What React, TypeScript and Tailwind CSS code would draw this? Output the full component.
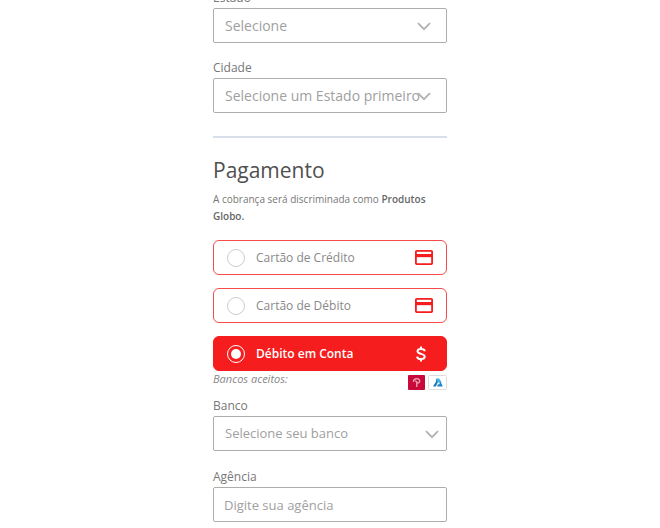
import { useState } from 'react';

function CardIcon() {
  return (
    <svg viewBox="0 0 18 15" className="w-[18px] h-[15px] ml-auto text-[#f51d1d]">
      <rect x=".9" y=".9" width="16.2" height="13.2" rx=".8" fill="none" stroke="currentColor" strokeWidth="1.8" />
      <path d="M1 4h16v3.200H1z" fill="currentColor" />
    </svg>
  );
}

function MoneyIcon() {
  return (
    <svg viewBox="0 0 10 16" fill="none" stroke="currentColor" strokeWidth="2" className="w-2.5 h-4 ml-auto mr-[7px]">
      <path d="M8.700 5.200C8.600 3.600 7.200 2.900 5 2.900S1.500 3.700 1.500 5.300C1.500 8.600 8.700 7.200 8.700 10.600c0 1.700-1.500 2.500-3.700 2.500s-3.700-.8-3.900-2.500M5 .4v2.500M5 13v2.600" />
    </svg>
  );
}

const methods = [
  { id: 'credito', label: 'Cartão de Crédito', icon: CardIcon },
  { id: 'debito', label: 'Cartão de Débito', icon: CardIcon },
  { id: 'conta', label: 'Débito em Conta', icon: MoneyIcon },
];

function SelectField({ id, label, placeholder, size = 'text-sm', chevron = 'right-4' }: {
  id: string;
  label: string;
  placeholder: string;
  size?: string;
  chevron?: string;
}) {
  return (
    <div>
      <label htmlFor={id} className="block mb-0.5 text-xs leading-4 text-[#777]">
        {label}
      </label>
      <div className="relative">
        <select
          id={id}
          className={`block w-full h-[35px] pl-[11px] text-[#a0a0a0] bg-white border border-[#adadad] rounded-xs appearance-none ${size}`}
        >
          <option>{placeholder}</option>
        </select>
        <svg
          viewBox="0 0 14 9"
          fill="none"
          stroke="#b3b3b3"
          strokeWidth="1.8"
          className={`pointer-events-none absolute top-3.5 w-3.5 h-[9px] ${chevron}`}
        >
          <path d="M1 1.2l6 6 6-6" />
        </svg>
      </div>
    </div>
  );
}

export default function App() {
  const [method, setMethod] = useState('conta');

  return (
    <div className="overflow-hidden bg-white font-['Open_Sans',sans-serif]">
      <form className="w-full max-w-[234px] mx-auto -mt-2.5 pb-1.5">
        <div className="flex flex-col gap-[17px]">
          <SelectField id="estado" label="Estado" placeholder="Selecione" />
          <SelectField id="cidade" label="Cidade" placeholder="Selecione um Estado primeiro" />
        </div>

        <hr className="mt-[23px] border-t-2 border-[#d9deeb]" />

        <h2 className="mt-[18px] text-[21px] leading-7 text-[#505050]">Pagamento</h2>
        <p className="mt-[7px] text-[10px] leading-[17px] text-[#777]">
          A cobrança será discriminada como <strong className="font-semibold text-[#666]">Produtos Globo.</strong>
        </p>

        <div className="flex flex-col gap-[13px] mt-[15px]">
          {methods.map(({ id, label, icon: Icon }) => {
            const active = method === id;
            return (
              <label
                key={id}
                className={`flex items-center h-[35px] px-[13px] text-xs border rounded-md ${
                  active
                    ? 'border-[#f51d1d] bg-[#f51d1d] font-semibold text-white'
                    : 'border-[#f84a4a] bg-white text-[#888]'
                }`}
              >
                <input
                  type="radio"
                  name="metodo"
                  checked={active}
                  onChange={() => setMethod(id)}
                  className="grid w-[18px] h-[18px] mr-[11px] border border-[#ccc] rounded-full appearance-none shrink-0 place-content-center checked:border-white checked:before:block checked:before:w-2.5 checked:before:h-2.5 checked:before:rounded-full checked:before:bg-white"
                />
                {label}
                <Icon />
              </label>
            );
          })}
        </div>

        <div className="flex items-start justify-between">
          <span className="text-[11px] italic leading-4 text-[#888]">Bancos aceitos:</span>
          <div className="flex gap-[3px] pt-1">
            <svg viewBox="0 0 17 15" className="w-[17px] h-[15px]">
              <rect width="17" height="15" rx="1" fill="#c9093a" />
              <path
                d="M5.300 6.800C5.600 4.600 7 3.700 8.700 3.700c2 0 3.200 1.300 3 2.800-.2 1.200-1.300 1.600-2.400 1.300M7.300 5.800l1.500 1.300V12"
                fill="none"
                stroke="#f3a9bb"
                strokeWidth="1.300"
              />
            </svg>
            <svg viewBox="0 0 19 15" className="w-[19px] h-[15px]">
              <rect x=".5" y=".5" width="18" height="14" rx="1" fill="#fff" stroke="#ddd" />
              <path d="M8 3.500h3l2.500 3.500-2 1.800z" fill="#35b6e6" />
              <path d="M8.500 3.500L10 7l-2.200 4.500H5L7.800 7z" fill="#1b78bd" />
              <path d="M12.500 6.500l2.300 5H9l1-2.200h1.700z" fill="#1687cb" />
            </svg>
          </div>
        </div>

        <div className="flex flex-col mt-2 gap-[18px]">
          <SelectField id="banco" label="Banco" placeholder="Selecione seu banco" size="text-[13px]" chevron="right-2" />
          <div>
            <label htmlFor="agencia" className="block mb-0.5 text-xs leading-4 text-[#777]">
              Agência
            </label>
            <input
              id="agencia"
              type="text"
              placeholder="Digite sua agência"
              className="block w-full h-[35px] px-2.5 text-[13px] bg-white border border-[#adadad] rounded-xs placeholder:text-[#a0a0a0]"
            />
          </div>
        </div>
      </form>
    </div>
  );
}
